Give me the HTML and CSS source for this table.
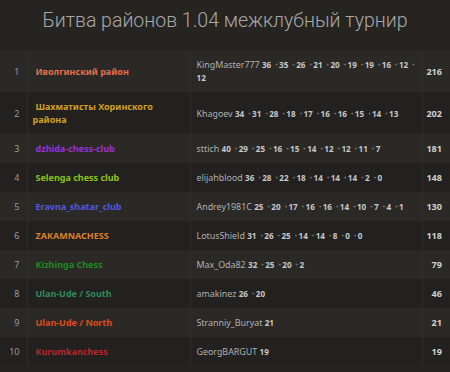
FILE: index.html
```html
<!DOCTYPE html>
<html>
<head>
<meta charset="utf-8">
<link rel="stylesheet" href="styles.css">
</head>
<body>
<h1 class="title">Битва районов 1.04 межклубный турнир</h1>
<table class="battle">
<colgroup><col class="c-rank"><col class="c-team"><col class="c-players"><col class="c-total"></colgroup>
<tbody>
<tr><td class="rank">1</td><td class="team t1">Иволгинский район</td><td class="players">KingMaster777 <b>36</b><i>+</i><wbr><b>35</b><i>+</i><wbr><b>26</b><i>+</i><wbr><b>21</b><i>+</i><wbr><b>20</b><i>+</i><wbr><b>19</b><i>+</i><wbr><b>19</b><i>+</i><wbr><b>16</b><i>+</i><wbr><b>12</b><i>+</i><wbr><b>12</b></td><td class="total">216</td></tr>
<tr><td class="rank">2</td><td class="team t2">Шахматисты Хоринского района</td><td class="players">Khagoev <b>34</b><i>+</i><wbr><b>31</b><i>+</i><wbr><b>28</b><i>+</i><wbr><b>18</b><i>+</i><wbr><b>17</b><i>+</i><wbr><b>16</b><i>+</i><wbr><b>16</b><i>+</i><wbr><b>15</b><i>+</i><wbr><b>14</b><i>+</i><wbr><b>13</b></td><td class="total">202</td></tr>
<tr><td class="rank">3</td><td class="team t3">dzhida-chess-club</td><td class="players">sttich <b>40</b><i>+</i><wbr><b>29</b><i>+</i><wbr><b>25</b><i>+</i><wbr><b>16</b><i>+</i><wbr><b>15</b><i>+</i><wbr><b>14</b><i>+</i><wbr><b>12</b><i>+</i><wbr><b>12</b><i>+</i><wbr><b>11</b><i>+</i><wbr><b>7</b></td><td class="total">181</td></tr>
<tr><td class="rank">4</td><td class="team t4">Selenga chess club</td><td class="players">elijahblood <b>36</b><i>+</i><wbr><b>28</b><i>+</i><wbr><b>22</b><i>+</i><wbr><b>18</b><i>+</i><wbr><b>14</b><i>+</i><wbr><b>14</b><i>+</i><wbr><b>14</b><i>+</i><wbr><b>2</b><i>+</i><wbr><b>0</b></td><td class="total">148</td></tr>
<tr><td class="rank">5</td><td class="team t5">Eravna_shatar_club</td><td class="players">Andrey1981C <b>25</b><i>+</i><wbr><b>20</b><i>+</i><wbr><b>17</b><i>+</i><wbr><b>16</b><i>+</i><wbr><b>16</b><i>+</i><wbr><b>14</b><i>+</i><wbr><b>10</b><i>+</i><wbr><b>7</b><i>+</i><wbr><b>4</b><i>+</i><wbr><b>1</b></td><td class="total">130</td></tr>
<tr><td class="rank">6</td><td class="team t6">ZAKAMNACHESS</td><td class="players">LotusShield <b>31</b><i>+</i><wbr><b>26</b><i>+</i><wbr><b>25</b><i>+</i><wbr><b>14</b><i>+</i><wbr><b>14</b><i>+</i><wbr><b>8</b><i>+</i><wbr><b>0</b><i>+</i><wbr><b>0</b></td><td class="total">118</td></tr>
<tr><td class="rank">7</td><td class="team t7">Kizhinga Chess</td><td class="players">Max_Oda82 <b>32</b><i>+</i><wbr><b>25</b><i>+</i><wbr><b>20</b><i>+</i><wbr><b>2</b></td><td class="total">79</td></tr>
<tr><td class="rank">8</td><td class="team t8">Ulan-Ude / South</td><td class="players">amakinez <b>26</b><i>+</i><wbr><b>20</b></td><td class="total">46</td></tr>
<tr><td class="rank">9</td><td class="team t9">Ulan-Ude / North</td><td class="players">Stranniy_Buryat <b>21</b></td><td class="total">21</td></tr>
<tr><td class="rank">10</td><td class="team t10">Kurumkanchess</td><td class="players">GeorgBARGUT <b>19</b></td><td class="total">19</td></tr>
</tbody>
</table>
</body>
</html>
```
FILE: styles.css
```css
html, body {
  margin: 0;
  padding: 0;
  background: #262421;
  font-family: "Noto Sans", sans-serif;
  color: #bababa;
}
.title {
  margin: 0;
  height: 50px;
  display: flex;
  align-items: center;
  justify-content: center;
  font-family: Roboto, sans-serif;
  font-weight: 300;
  font-size: 19.5px;
  color: #a8a8a8;
  padding-bottom: 9px;
  box-sizing: border-box;
}
.battle {
  width: 450px;
  border-collapse: collapse;
  table-layout: fixed;
  font-size: 9px;
  line-height: 13px;
}
.c-rank { width: 27px; }
.c-team { width: 163px; }
.c-players { width: 232px; }
.c-total { width: 28px; }
.battle tr:nth-child(odd) { background: #2a2926; }
.battle tr:nth-child(even) { background: #22211f; }
.battle td {
  padding: 8px 6px 8px;
  height: 13px;
  border-left: 1px solid #2f2e2b;
  vertical-align: middle;
}
.battle td:first-child { border-left: 0; }
.rank {
  text-align: right;
  color: #9a9a9a;
  padding-right: 7px !important;
}
.team {
  font-weight: 700;
  font-size: 9px;
  padding-left: 5px !important;
  text-indent: 3px;
}
.players {
  font-size: 8.9px;
  color: #b0b0b0;
  padding-right: 0 !important;
}
.players b {
  font-weight: 700;
  font-size: 8.1px;
  line-height: 1;
  color: #c8c8c8;
}
.players i {
  font-style: normal;
  font-size: 5px;
  line-height: 1;
  vertical-align: 1px;
  color: #8a8a8a;
  padding: 0 1.2px 0 3.8px;
}
.total {
  text-align: right;
  font-weight: 700;
  font-size: 9.1px;
  color: #cfcfcf;
  padding-right: 8px !important;
  padding-left: 0 !important;
}
.t1 { color: #e0704f; }
.t2 { color: #d2a01e; }
.t3 { color: #9a2fd8; }
.t4 { color: #8cc11c; }
.t5 { color: #5657df; }
.t6 { color: #d9822a; }
.t7 { color: #1f8a1f; }
.t8 { color: #2f8c58; }
.t9 { color: #e2491a; }
.t10 { color: #b6262a; }
```
